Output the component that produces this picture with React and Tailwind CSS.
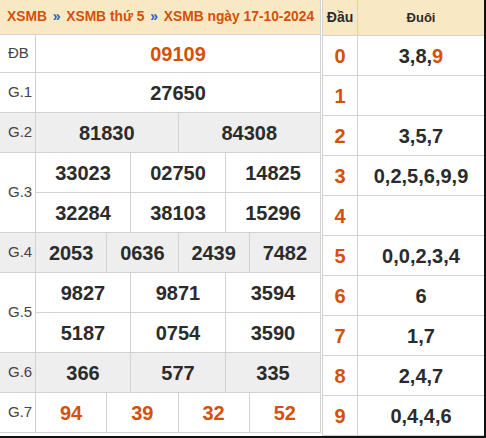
import React from 'react';

const ORANGE = 'text-[#d4500b]';
const line = 'border-[#d2d2d2]';

function Num({ children, orange }) {
  return (
    <div className={`flex-1 flex items-center justify-center text-[20px] font-bold ${orange ? ORANGE : 'text-[#2b2b2b]'}`}>
      {children}
    </div>
  );
}

function Cells({ values, orange }) {
  return (
    <div className="flex-1 flex divide-x divide-[#d2d2d2]">
      {values.map((v, i) => (
        <Num key={i} orange={orange}>
          {v}
        </Num>
      ))}
    </div>
  );
}

function Row({ label, rows, h, gray, orange }) {
  return (
    <div className={`flex border-b ${line} ${gray ? 'bg-[#eeeeee]' : 'bg-white'}`} style={{ height: h }}>
      <div className={`w-[36px] shrink-0 flex items-center pl-[8px] text-[15px] text-[#444] border-r ${line}`}>
        {label}
      </div>
      <div className="flex-1 flex flex-col">
        {rows.map((r, i) => (
          <div key={i} className={`flex-1 flex ${i > 0 ? `border-t ${line}` : ''}`}>
            <Cells values={r} orange={orange} />
          </div>
        ))}
      </div>
    </div>
  );
}

const loto = [
  ['0', '3,8,', '9'],
  ['1', ''],
  ['2', '3,5,7'],
  ['3', '0,2,5,6,9,9'],
  ['4', ''],
  ['5', '0,0,2,3,4'],
  ['6', '6'],
  ['7', '1,7'],
  ['8', '2,4,7'],
  ['9', '0,4,4,6'],
];

export default function App() {
  return (
    <div
      className="w-[486px] h-[438px] bg-[#111] overflow-hidden"
      style={{ fontFamily: '"Liberation Sans", Arial, sans-serif' }}
    >
      <div className="w-[484px] h-[436px] bg-white flex">
        {/* kết quả */}
        <div className="w-[321px] shrink-0 border-r border-[#d2d2d2] self-start">
          <div className={`h-[35px] flex items-center pl-[7px] bg-[#f8e9c4] border-b ${line} text-[13.8px] font-bold ${ORANGE} whitespace-pre`}>
            {'XSMB '}
            <span className="text-[#1e5fbf] mx-[2px]">»</span>
            {' XSMB thứ 5 '}
            <span className="text-[#1e5fbf] mx-[2px]">»</span>
            {' XSMB ngày 17-10-2024'}
          </div>
          <Row label="ĐB" h={38} rows={[['09109']]} orange />
          <Row label="G.1" h={40} rows={[['27650']]} />
          <Row label="G.2" h={40} gray rows={[['81830', '84308']]} />
          <Row label="G.3" h={80} rows={[['33023', '02750', '14825'], ['32284', '38103', '15296']]} />
          <Row label="G.4" h={40} gray rows={[['2053', '0636', '2439', '7482']]} />
          <Row label="G.5" h={80} rows={[['9827', '9871', '3594'], ['5187', '0754', '3590']]} />
          <Row label="G.6" h={40} gray rows={[['366', '577', '335']]} />
          <Row label="G.7" h={40} rows={[['94', '39', '32', '52']]} orange />
        </div>

        {/* lô tô */}
        <div className="ml-[1px] flex-1 border-l border-[#d2d2d2] flex flex-col">
          <div className={`h-[36px] flex bg-[#f8e9c4] border-b ${line} text-[#2b2b2b] font-bold`}>
            <div className={`w-[35px] flex items-center justify-center text-[14px] border-r ${line}`}>Đầu</div>
            <div className="flex-1 flex items-center justify-center text-[13px]">Đuôi</div>
          </div>
          {loto.map(([d, t, hl]) => (
            <div key={d} className={`h-[40px] flex border-b ${line}`}>
              <div className={`w-[35px] flex items-center justify-center text-[20px] font-bold ${ORANGE} border-r ${line}`}>
                {d}
              </div>
              <div className="flex-1 flex items-center justify-center text-[20px] font-bold text-[#2b2b2b]">
                {t}
                {hl && <span className={ORANGE}>{hl}</span>}
              </div>
            </div>
          ))}
        </div>
      </div>
    </div>
  );
}
